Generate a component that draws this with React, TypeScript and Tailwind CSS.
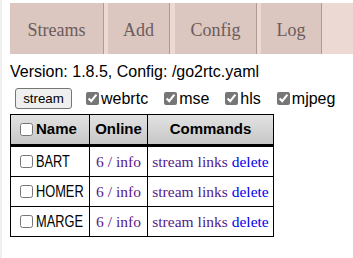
import React from 'react';

const tabs = [
  { label: 'Streams', width: 'w-[94px]', gap: 'mr-[4px]' },
  { label: 'Add', width: 'w-[62px]', gap: 'mr-[5px]' },
  { label: 'Config', width: 'w-[82px]', gap: 'mr-[4px]' },
  { label: 'Log', width: 'w-[61px]', gap: '' },
];

const streams = ['BART', 'HOMER', 'MARGE'];

const serif = { fontFamily: '"Liberation Serif", "Times New Roman", serif' };

function Check({ checked }: { checked?: boolean }) {
  return (
    <input
      type="checkbox"
      defaultChecked={checked}
      className="m-0 h-[13px] w-[13px] shrink-0 accent-[#767676]"
    />
  );
}

export default function App() {
  return (
    <div
      className="min-h-[258px] border-l-2 border-[#efefef] bg-white pl-2 pt-[3px] text-black"
      style={{ fontFamily: '"Liberation Sans", Arial, sans-serif' }}
    >
      {/* Nav */}
      <nav className="flex h-[51px] bg-[#ecd9d4]">
        {tabs.map((t) => (
          <a
            key={t.label}
            className={`${t.width} ${t.gap} flex items-center justify-center border-r border-[#b09a94] bg-[#dbc6c0] pt-[2px] text-[18px] leading-[20px] text-[#6c5c5b]`}
            style={serif}
          >
            {t.label}
          </a>
        ))}
      </nav>

      {/* Info */}
      <div className="mt-[9px] text-[16px] leading-[18px]">Version: 1.8.5, Config: /go2rtc.yaml</div>

      {/* Controls */}
      <div className="mt-[7px] flex h-[21px] items-center pl-[5px] text-[16px]">
        <button className="h-[21px] w-[57px] rounded-[3px] border border-[#767676] bg-[#efefef] text-[13.33px] leading-[15px]">
          stream
        </button>
        {['webrtc', 'mse', 'hls', 'mjpeg'].map((m, i) => (
          <label key={m} className={`flex items-center ${i === 0 ? 'ml-[14px]' : 'ml-4'}`}>
            <Check checked />
            <span className="ml-[2px] leading-[18px]">{m}</span>
          </label>
        ))}
      </div>

      {/* Table */}
      <div className="mt-[5px] grid w-[264px] grid-cols-[79px_58px_126px] border-l border-t border-black">
        <div className="flex h-[32px] items-center border-b-[3px] border-r border-black bg-gradient-to-b from-[#e2e2e2] to-[#c7c7c7] pl-[9px] text-[15px] font-bold">
          <Check />
          <span className="ml-[3px]">Name</span>
        </div>
        <div className="flex h-[32px] items-center justify-center border-b-[3px] border-r border-black bg-gradient-to-b from-[#e2e2e2] to-[#c7c7c7] text-[15px] font-bold">
          Online
        </div>
        <div className="flex h-[32px] items-center justify-center border-b-[3px] border-r border-black bg-gradient-to-b from-[#e2e2e2] to-[#c7c7c7] text-[15px] font-bold">
          Commands
        </div>

        {streams.map((s) => (
          <React.Fragment key={s}>
            <div className="flex h-[30px] items-center overflow-hidden border-b border-r border-black pl-[9px] text-[16px]">
              <Check />
              <span className="ml-[3px] inline-block origin-left scale-x-[0.8] whitespace-nowrap">{s}</span>
            </div>
            <div className="flex h-[30px] items-center justify-center border-b border-r border-black text-[15.5px]" style={serif}>
              <a className="text-[#551a8b]">6 / info</a>
            </div>
            <div className="flex h-[30px] items-center justify-center gap-[4px] border-b border-r border-black text-[15.5px]" style={serif}>
              <a className="text-[#551a8b]">stream</a>
              <a className="text-[#551a8b]">links</a>
              <a className="text-[#0000ee]">delete</a>
            </div>
          </React.Fragment>
        ))}
      </div>
    </div>
  );
}
